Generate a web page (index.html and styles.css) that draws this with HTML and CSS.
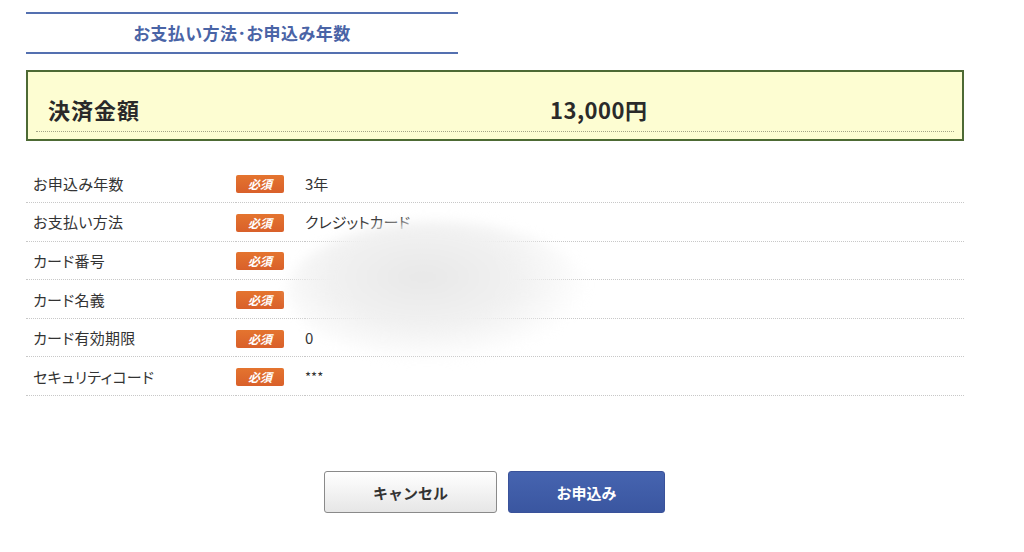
FILE: index.html
```html
<html>
    <head>
        <title>お支払い方法・お申込み年数</title>
        <link rel="stylesheet" href="styles.css">
    </head>
    <body class="body">
        <div class="page">
            <h2 class="title">お支払い方法･お申込み年数</h2>

            <div class="total">
                <div class="total-row">
                    <span class="total-label">決済金額</span>
                    <span class="total-price">13,000円</span>
                </div>
            </div>

            <table class="form-table">
                <tr>
                    <th>お申込み年数</th>
                    <td class="req"><span class="badge">必須</span></td>
                    <td>3年</td>
                </tr>
                <tr>
                    <th>お支払い方法</th>
                    <td class="req"><span class="badge">必須</span></td>
                    <td>クレジットカード</td>
                </tr>
                <tr>
                    <th>カード番号</th>
                    <td class="req"><span class="badge">必須</span></td>
                    <td></td>
                </tr>
                <tr>
                    <th>カード名義</th>
                    <td class="req"><span class="badge">必須</span></td>
                    <td></td>
                </tr>
                <tr>
                    <th>カード有効期限</th>
                    <td class="req"><span class="badge">必須</span></td>
                    <td class="faint">0</td>
                </tr>
                <tr>
                    <th>セキュリティコード</th>
                    <td class="req"><span class="badge">必須</span></td>
                    <td class="stars">***</td>
                </tr>
            </table>

            <!-- hidden card data -->
            <div class="blur"></div>

            <div class="buttons">
                <button class="btn btn-cancel">キャンセル</button>
                <button class="btn btn-submit">お申込み</button>
            </div>
        </div>
    </body>
</html>
```

FILE: styles.css
```css
.body{
    margin: 0;
    background-color: #ffffff;
    font-family: "Noto Sans CJK JP", "Liberation Sans", sans-serif;
    font-feature-settings: "palt";
    color: #333333;
}
.page{
    position: relative;
    width: 938px;
    margin-left: 26px;
    padding-top: 12px;
}
.title{
    width: 432px;
    margin: 0;
    border-top: 2px solid #5470b0;
    border-bottom: 2px solid #5470b0;
    height: 38px;
    line-height: 38px;
    text-align: center;
    font-size: 17px;
    font-weight: bold;
    color: #4a64a6;
    letter-spacing: 0.5px;
}
.total{
    margin-top: 16px;
    height: 67px;
    border: 2px solid #4d6a34;
    background-color: #fdfdd2;
    padding: 0 8px;
}
.total-row{
    display: flex;
    align-items: center;
    height: 59px;
    border-bottom: 1px dotted #a4a488;
}
.total-label{
    width: 502px;
    padding-left: 12px;
    font-size: 22px;
    font-weight: bold;
    color: #2a2a2a;
    padding-top: 14px;
    letter-spacing: 1px;
}
.total-price{
    font-size: 22px;
    font-weight: bold;
    color: #2a2a2a;
    padding-top: 14px;
    letter-spacing: 0.5px;
}
.form-table{
    width: 100%;
    margin-top: 23px;
    border-collapse: collapse;
    font-size: 15px;
}
.form-table th,
.form-table td{
    height: 38.6px;
    padding: 0;
    text-align: left;
    font-weight: normal;
    border-bottom: 1px dotted #c8c8c8;
    vertical-align: middle;
    color: #333333;
}
.form-table th{
    width: 203px;
    padding-left: 7px;
    letter-spacing: 0.3px;
}
.form-table .req{
    width: 69px;
}
.badge{
    display: inline-block;
    width: 48px;
    height: 18px;
    line-height: 18px;
    text-align: center;
    background: linear-gradient(#e4742f, #d9602a);
    color: #ffffff;
    font-size: 12px;
    font-weight: bold;
    font-style: italic;
    border-radius: 2px;
    margin-top: 2px;
}
.faint{
    color: #d6d6d6;
}
.stars{
    font-size: 13px;
    vertical-align: top;
}
.blur{
    position: absolute;
    left: 262px;
    top: 221px;
    width: 300px;
    height: 140px;
    border-radius: 50%;
    background: radial-gradient(ellipse at 45% 40%, #e8e8e8 0%, #f1f1f1 40%, rgba(255,255,255,0) 72%);
    filter: blur(6px);
}
.buttons{
    display: flex;
    justify-content: center;
    gap: 11px;
    margin-top: 75px;
    padding-left: 299px;
    padding-right: 300px;
}
.btn{
    flex: none;
    height: 42px;
    font-family: "Noto Sans CJK JP", "Liberation Sans", sans-serif;
    font-size: 15px;
    font-weight: bold;
    border-radius: 3px;
}
.btn-cancel{
    width: 173px;
    background: linear-gradient(#ffffff, #e6e6e6);
    border: 1px solid #8a8a8a;
    color: #333333;
}
.btn-submit{
    width: 157px;
    background: linear-gradient(#4664b0, #3a56a0);
    border: 1px solid #3a529a;
    color: #ffffff;
}
```
